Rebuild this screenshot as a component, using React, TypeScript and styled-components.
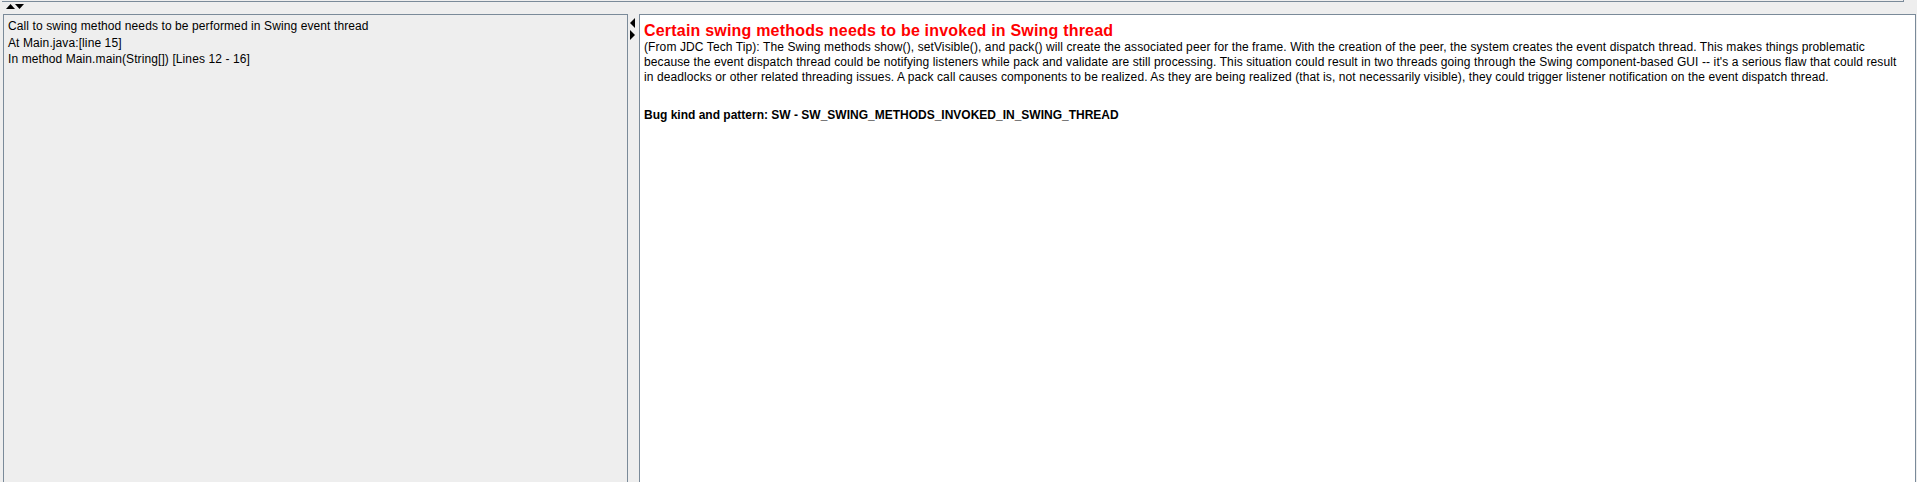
import React from 'react';
import styled, { createGlobalStyle } from 'styled-components';

const GlobalStyle = createGlobalStyle`
  html, body {
    margin: 0;
    padding: 0;
    background: #eeeeee;
  }
  body {
    font-family: "Liberation Sans", Arial, sans-serif;
    font-size: 12px;
    color: #000;
    overflow: hidden;
  }
`;

const Frame = styled.div`
  width: 1917px;
  height: 482px;
  display: flex;
  flex-direction: column;
  background: #eeeeee;
  overflow: hidden;
`;

/* bottom edge of the pane above the split divider */
const UpperPaneEdge = styled.div`
  height: 1px;
  width: 1901px;
  margin-left: 2px;
  border-bottom: 1px solid #7a8a99;
  border-right: 1px solid #7a8a99;
`;

const HorizontalDivider = styled.div`
  height: 12px;
  box-sizing: border-box;
  padding: 2px 0 0 6px;
  display: flex;
  align-items: flex-start;
`;

const VerticalDivider = styled.div`
  width: 11px;
  flex: none;
  box-sizing: border-box;
  padding: 4px 0 0 2px;
  display: flex;
  flex-direction: column;
  gap: 2px;
`;

const SplitRow = styled.div`
  flex: 1;
  display: flex;
  padding-left: 3px;
  min-height: 0;
`;

const Pane = styled.div<{ $white?: boolean; $width: number }>`
  width: ${({ $width }) => $width}px;
  flex: none;
  box-sizing: border-box;
  border: 1px solid #7a8a99;
  border-bottom: none;
  background: ${({ $white }) => ($white ? '#ffffff' : '#eeeeee')};
  overflow: hidden;
`;

const ListBody = styled.div`
  padding: 3px 4px;
`;

const ListRow = styled.div`
  line-height: 16.67px;
  white-space: nowrap;
  letter-spacing: 0.1px;
`;

const Details = styled.div`
  padding: 7px 4px 0 4px;
`;

const Title = styled.div`
  color: #ff0000;
  font-weight: bold;
  font-size: 16px;
  line-height: 18px;
  white-space: nowrap;
  letter-spacing: 0.2px;
`;

const Description = styled.div`
  line-height: 15px;
  white-space: nowrap;
  letter-spacing: 0.1px;
`;

const BugKind = styled.div`
  margin-top: 23px;
  font-weight: bold;
  line-height: 15px;
  white-space: nowrap;
`;

type Dir = 'up' | 'down' | 'left' | 'right';

const points: Record<Dir, string> = {
  up: '4.5,0 9,5 0,5',
  down: '0,0 9,0 4.5,5',
  left: '5,0 5,10 0,5',
  right: '0,0 5,5 0,10',
};

const Arrow = ({ dir }: { dir: Dir }) => {
  const vertical = dir === 'up' || dir === 'down';
  const w = vertical ? 9 : 5;
  const h = vertical ? 5 : 10;
  return (
    <svg width={w} height={h} viewBox={`0 0 ${w} ${h}`} style={{ display: 'block' }}>
      <polygon points={points[dir]} fill="#000" />
    </svg>
  );
};

const App: React.FC = () => {
  return (
    <Frame>
      <GlobalStyle />
      <UpperPaneEdge />
      <HorizontalDivider>
        <Arrow dir="up" />
        <Arrow dir="down" />
      </HorizontalDivider>
      <SplitRow>
        <Pane $width={625}>
          <ListBody>
            <ListRow>Call to swing method needs to be performed in Swing event thread</ListRow>
            <ListRow>At Main.java:[line 15]</ListRow>
            <ListRow>In method Main.main(String[]) [Lines 12 - 16]</ListRow>
          </ListBody>
        </Pane>
        <VerticalDivider>
          <Arrow dir="left" />
          <Arrow dir="right" />
        </VerticalDivider>
        <Pane $white $width={1277}>
          <Details>
            <Title>Certain swing methods needs to be invoked in Swing thread</Title>
            <Description>
              (From JDC Tech Tip): The Swing methods show(), setVisible(), and pack() will create the associated peer for the frame. With the creation of the peer, the system creates the event dispatch thread. This makes things problematic
              <br />
              because the event dispatch thread could be notifying listeners while pack and validate are still processing. This situation could result in two threads going through the Swing component-based GUI -- it's a serious flaw that could result
              <br />
              in deadlocks or other related threading issues. A pack call causes components to be realized. As they are being realized (that is, not necessarily visible), they could trigger listener notification on the event dispatch thread.
            </Description>
            <BugKind>Bug kind and pattern: SW - SW_SWING_METHODS_INVOKED_IN_SWING_THREAD</BugKind>
          </Details>
        </Pane>
      </SplitRow>
    </Frame>
  );
};

export default App;
